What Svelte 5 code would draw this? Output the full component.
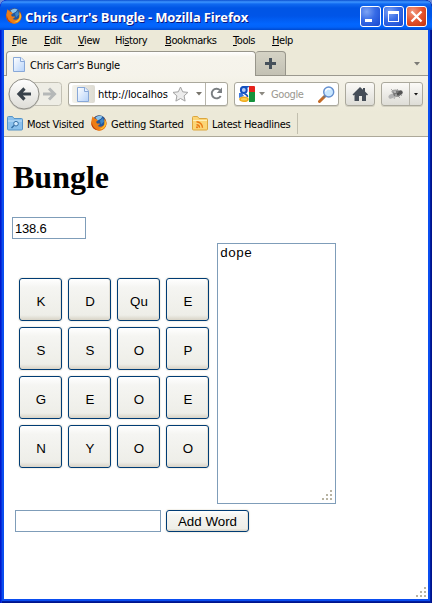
<script>
  const menus = [
    { pre: '', key: 'F', post: 'ile', w: 32 },
    { pre: '', key: 'E', post: 'dit', w: 34 },
    { pre: '', key: 'V', post: 'iew', w: 37 },
    { pre: 'Hi', key: 's', post: 'tory', w: 50 },
    { pre: '', key: 'B', post: 'ookmarks', w: 68 },
    { pre: '', key: 'T', post: 'ools', w: 39 },
    { pre: '', key: 'H', post: 'elp', w: 30 }
  ];
  const letters = ['K', 'D', 'Qu', 'E', 'S', 'S', 'O', 'P', 'G', 'E', 'O', 'E', 'N', 'Y', 'O', 'O'];
</script>

{#snippet firefox()}
  <svg class="fx" width="16" height="16" viewBox="0 0 16 16">
    <circle cx="8" cy="8" r="7.6" fill="#d9560b" />
    <circle cx="8.300" cy="6.500" r="6.200" fill="#23589c" />
    <path d="M4.500 2.500Q8-.5 11.500 1.500L10 3.500 8.500 4.500 6.500 5.500z" fill="#8cc4ea" />
    <path d="M9 5.500l3-2.500 1 3.500-3 3z" fill="#3f86c6" />
    <path d="M.8 4L1.500 1.200 3.400 3.200 5.500 4 6.800 5.800 5 6.800 6 8.600 9 8.600Q8.500 11 6.200 10.600 9.500 13 12.400 10.500 14.500 8 13 3.500 15.800 6 15.500 9.300 14 15.500 8 15.700 2 15 .5 10 0 6 .8 4z" fill="#ee7d15" />
    <path d="M13.600 4.500Q16 8 14 11.500 11.500 15 7.500 14.200 12 13.200 13.500 9.500z" fill="#ffc62e" />
    <path d="M.8 7Q1.300 12.500 6.500 15 2 14.500.6 10z" fill="#b5330c" />
  </svg>
{/snippet}

{#snippet page()}
  <svg width="12" height="15" viewBox="0 0 12 15">
    <defs>
      <linearGradient id="sheet" x1="0" y1="0" x2="1" y2="1">
        <stop offset="0" stop-color="#fff" /><stop offset="1" stop-color="#b5d2fa" />
      </linearGradient>
    </defs>
    <path d="M.5.5H8L11.500 4V14.500H.5z" fill="url(#sheet)" stroke="#88a8d8" />
    <path d="M7.500.5V4.500H11.500" fill="#e9f2ff" stroke="#88a8d8" />
  </svg>
{/snippet}

{#snippet grip()}
  <svg width="10" height="10" viewBox="0 0 10 10" fill="#b8b4a3" shape-rendering="crispEdges">
    <path d="M8 0h2v2H8zM4 4h2v2H4zM8 4h2v2H8zM0 8h2v2H0zM4 8h2v2H4zM8 8h2v2H8z" />
  </svg>
{/snippet}

<div class="window">
  <header class="title">
    {@render firefox()}
    <span class="caption">Chris Carr's Bungle - Mozilla Firefox</span>
    <div class="controls">
      <span class="ctl"><svg width="21" height="21"><path d="M5 13h7v3H5z" fill="#fff" /></svg></span>
      <span class="ctl"><svg width="21" height="21"><path d="M5 5h11v11H5zM6 8v7h9V8z" fill="#fff" fill-rule="evenodd" /></svg></span>
      <span class="ctl close"><svg width="21" height="21"><path d="M5.500 5.500l10 10M15.500 5.500l-10 10" stroke="#fff" stroke-width="2.300" /></svg></span>
    </div>
  </header>

  <div class="body">
    <nav class="menu">
      {#each menus as m}
        <span style:width="{m.w}px">{m.pre}<u>{m.key}</u>{m.post}</span>
      {/each}
    </nav>

    <div class="tabs">
      <div class="tab">{@render page()}<span class="tabname">Chris Carr's Bungle</span></div>
      <div class="plus"><svg width="11" height="11"><path d="M4 0h3v4h4v3H7v4H4V7H0V4h4z" fill="#45505a" /></svg></div>
      <svg class="alltabs" width="6" height="4"><path d="M0 0h6L3 3.500z" fill="#7b7b76" /></svg>
    </div>

    <div class="toolbar">
      <svg class="history" width="56" height="34" viewBox="0 0 56 34">
        <defs>
          <linearGradient id="round" x1="0" y1="0" x2="0" y2="1">
            <stop offset="0" stop-color="#fff" /><stop offset="1" stop-color="#dddcd6" />
          </linearGradient>
        </defs>
        <rect x="20" y="5.500" width="34.500" height="23" rx="3" fill="#eeede5" stroke="#c3c1b5" />
        <circle cx="17" cy="17.500" r="15.500" fill="#c8c6bd" />
        <circle cx="17" cy="17" r="15" fill="url(#round)" stroke="#908f88" />
        <path d="M24 17H12M17.500 11.500L12 17l5.500 5.500" fill="none" stroke="#39424b" stroke-width="3.200" />
        <path d="M36 17h10M42 11.500l5.500 5.500-5.500 5.500" fill="none" stroke="#b5b8b8" stroke-width="3" />
      </svg>

      <div class="field url">
        <span class="identity">{@render page()}</span>
        <span class="address">http://localhos</span>
        <svg class="star" width="17" height="16" viewBox="0 0 17 16"><path d="M8.500 1l2.200 4.800 5.200.6-3.800 3.500 1 5.200-4.600-2.600-4.600 2.600 1-5.200L1 6.400l5.300-.6z" fill="#ececec" stroke="#a2a2a2" /></svg>
        <svg class="drop" width="6" height="4"><path d="M0 0h6L3 3.500z" fill="#77736b" /></svg>
        <span class="reload"><svg width="13" height="13" viewBox="0 0 13 13"><path d="M10.700 9A4.800 4.800 0 1 1 10 3.200" fill="none" stroke="#7b7f82" stroke-width="1.900" /><path d="M12 .5v5.500H6.800z" fill="#7b7f82" /></svg></span>
      </div>

      <div class="field search">
        <svg width="16" height="16" viewBox="0 0 16 16">
          <path d="M10 0h5q1 0 1 1v5h-6z" fill="#e5231c" />
          <path d="M10 6h6v9q0 1-1 1h-5z" fill="#15923c" />
          <path d="M0 7h3l2 3-5 2z" fill="#3a78e0" />
          <ellipse cx="4.800" cy="4" rx="2.900" ry="3.100" fill="#b5cdf8" stroke="#1450bf" stroke-width="2" />
          <path d="M5 0h5.500L9 1.800H7z" fill="#1450bf" />
          <path d="M5.500 8q3 .5 3 3" fill="none" stroke="#1450bf" stroke-width="1.600" />
          <ellipse cx="5" cy="13.200" rx="4" ry="2" fill="#f9cf52" stroke="#efaa1e" stroke-width="1.600" />
        </svg>
        <svg class="sdrop" width="6" height="4"><path d="M0 0h6L3 3.500z" fill="#8b8880" /></svg>
        <span class="hint">Google</span>
        <svg class="lens" width="17" height="17" viewBox="0 0 17 17"><path d="M1.500 15.500l5-5" stroke="#c56b26" stroke-width="3" stroke-linecap="round" /><path d="M5.500 11.500l2-2" stroke="#777" stroke-width="2" /><circle cx="10.700" cy="6" r="5" fill="#c9e7ff" stroke="#6690cf" stroke-width="1.400" /><path d="M7.500 5.500a3 3 0 0 1 5-2" fill="none" stroke="#fff" stroke-width="1.500" /></svg>
      </div>

      <div class="btn home"><svg width="16" height="14" viewBox="0 0 16 14"><path d="M8 0l3 2.700V1h2v3.500l3 3-1 1-1-.7V14h-4V9H7v5H2.500V7.800l-1 .7-1-1z" fill="#454d57" /></svg></div>

      <div class="btn bug">
        <svg width="18" height="14" viewBox="0 0 18 14">
          <path d="M6 4L4 2M10 3l1-1M5 9l-2 2.500M8 10l-1 2M11 9l2 2M13 7l2 2" stroke="#999" stroke-width=".8" />
          <ellipse cx="5" cy="9" rx="3.800" ry="2.200" transform="rotate(-25 5 9)" fill="#b3b3b3" />
          <ellipse cx="8.500" cy="4.500" rx="4" ry="2" fill="#a2a2a2" />
          <ellipse cx="10" cy="6.800" rx="3.800" ry="3" fill="#777" />
          <circle cx="13.500" cy="5.500" r="2.200" fill="#555" /><circle cx="8" cy="5" r="1" fill="#c6c6c6" /><circle cx="11" cy="7" r="1" fill="#444" /><circle cx="9" cy="8" r=".8" fill="#ccc" />
        </svg>
        <span class="more"><svg width="4" height="3"><path d="M0 0h4L2 2.500z" fill="#111" /></svg></span>
      </div>
    </div>

    <div class="bookmarks">
      <svg width="16" height="15" viewBox="0 0 16 15"><path d="M.5 13V1.500q0-1 1-1h4l1.500 2h7.500q1 0 1 1V13q0 1-1 1h-13q-1 0-1-1z" fill="#8bc1ed" stroke="#5494c8" /><path d="M1 5h14" stroke="#c2e1fa" /><circle cx="9" cy="7.700" r="2.300" fill="#d3ebff" stroke="#356fa4" /><path d="M7 9.500l-2.500 2.500" stroke="#356fa4" stroke-width="1.500" /></svg>
      <span class="label" style:width="64px">Most Visited</span>
      {@render firefox()}
      <span class="label" style:width="81px">Getting Started</span>
      <svg width="16" height="15" viewBox="0 0 16 15"><path d="M.5 13V1.500q0-1 1-1h4l1.500 2h7.500q1 0 1 1V13q0 1-1 1h-13q-1 0-1-1z" fill="#fbd576" stroke="#dca63d" /><path d="M1 4.500h14" stroke="#fff0b8" /><path d="M4.500 8.700a3 3 0 0 1 3 3M4.500 5.700a6 6 0 0 1 6 6" fill="none" stroke="#e97812" stroke-width="1.400" /><circle cx="5" cy="11.300" r="1" fill="#e97812" /></svg>
      <span class="label last">Latest Headlines</span>
    </div>

    <main>
      <h1>Bungle</h1>
      <div class="box timer">138.6</div>
      <div class="game">
        <div class="board">
          {#each letters as l}<button class="xp">{l}</button>{/each}
        </div>
        <div class="box words"><span>dope</span><i>{@render grip()}</i></div>
      </div>
      <div class="entry">
        <div class="box word"></div>
        <button class="xp add">Add Word</button>
      </div>
      <i class="corner">{@render grip()}</i>
    </main>
  </div>
</div>

<style>
  :global(body) { margin: 0; background: #6f8fd8; }
  * { box-sizing: border-box; }
  svg { display: block; flex: none; }
  .window {
    width: 432px; height: 603px; padding: 0 4px 4px; overflow: hidden;
    display: flex; flex-direction: column;
    border-radius: 7px 7px 0 0;
    background: #0a4df0;
    box-shadow: inset 1px 0 #0019cf, inset 2px 0 #0831d9, inset -1px 0 #00138c, inset -2px 0 #001ea0, inset 0 -1px #00138c, inset 0 -2px #001ea0;
    font: 11px/14px "DejaVu Sans Condensed", "DejaVu Sans", sans-serif;
    letter-spacing: -.26px;
    color: #000;
  }
  .title {
    height: 30px; flex: none; margin: 0 -4px; padding: 2px 6px 0;
    display: flex; align-items: center;
    background: linear-gradient(#0b4fd0 0, #3d95ff 2px, #1069f0 4px, #0055e5 8px, #0055e8 16px, #0266ff 24px, #0263fa 27px, #0049cf 30px);
    border-radius: 7px 7px 0 0;
  }
  .caption { margin-left: 3px; padding-top: 1px; color: #fff; font: bold 13px/18px "Open Sans", sans-serif; white-space: nowrap; letter-spacing: -.15px; text-shadow: 1px 1px #0a1883; }
  .controls { display: flex; gap: 2px; margin-left: auto; margin-right: -1px; }
  .ctl { width: 21px; height: 21px; border: 1px solid #fff; border-radius: 3px; background: radial-gradient(circle at 30% 25%, #7ea4f4, #376be6 45%, #1747ce); }
  .ctl svg { margin: -1px; }
  .close { background: radial-gradient(circle at 30% 25%, #f19a80, #e3522d 50%, #c23209); }
  .body { flex: 1; display: flex; flex-direction: column; background: #ece9d8; min-height: 0; }
  .menu { height: 21px; flex: none; display: flex; padding: 4px 0 0 8px; white-space: nowrap; letter-spacing: -.42px; }
  .menu span { flex: none; }
  u { text-underline-offset: 1px; text-decoration-thickness: 1px; }
  .tabs { height: 25px; flex: none; display: flex; padding-left: 2px; box-shadow: inset 0 -1px #9b998f; }
  .tab { width: 250px; display: flex; align-items: center; padding: 1px 0 0 6px; gap: 5px; border: 1px solid #97958a; border-bottom: 0; border-radius: 4px 4px 0 0; background: linear-gradient(#fff, #f6f4ec 5px, #f5f3ea); white-space: nowrap; }
  .tabname { padding-top: 2px; }
  .plus { width: 30px; display: flex; align-items: center; justify-content: center; border: 1px solid #97958a; border-left: 0; border-radius: 3px 4px 0 0; background: linear-gradient(#d5d3c5, #c3c1b4); }
  .alltabs { margin: 11px 8px 0 auto; }
  .toolbar { height: 36px; flex: none; display: flex; align-items: center; padding-left: 3px; background: linear-gradient(#f5f3ea, #ece9d8); }
  .field, .btn { height: 24px; border: 1px solid #aaa89c; border-radius: 3px; display: flex; align-items: center; box-shadow: 0 1px #d3d0c1; white-space: nowrap; }
  .field { background: #fff; }
  .url { width: 160px; margin-left: 5px; padding-left: 3px; }
  .identity { width: 23px; height: 18px; padding: 2px 0 0 5px; border-radius: 2px; background: linear-gradient(90deg, #f4f3ed, #dddbd2); }
  .address { width: 71px; margin-left: 3px; padding-top: 2px; letter-spacing: -.06px; }
  .star { margin-left: 3px; }
  .drop { margin-left: 7px; }
  .reload { height: 22px; margin-left: auto; padding: 4px 4px 0; border-left: 1px solid #b7b5ab; }
  .search { width: 105px; margin-left: 6px; padding-left: 4px; }
  .sdrop { margin-left: 4px; }
  .hint { width: 34px; margin-left: 6px; padding-top: 2px; color: #9a978f; letter-spacing: -.4px; }
  .lens { margin-left: 13px; }
  .btn { background: linear-gradient(#fbfaf7, #deddd7); }
  .home { width: 30px; margin-left: 6px; justify-content: center; }
  .bug { width: 42px; margin-left: 6px; padding-left: 5px; }
  .more { height: 22px; width: 13px; margin-left: auto; padding: 10px 0 0 4px; border-left: 1px solid #b7b5ab; }
  .bookmarks { height: 25px; flex: none; display: flex; align-items: center; padding: 0 0 2px 3px; border-bottom: 1px solid #aca899; white-space: nowrap; }
  .bookmarks .label { flex: none; padding: 4px 0 0 4px; margin-right: 4px; }
  .bookmarks .last { width: 90px; height: 21px; padding-top: 5px; border-right: 1px solid #c2bfae; }
  main { position: relative; flex: 1; min-height: 0; padding: 22px 8px 0; background: #fff; font: 13.333px/16px "Liberation Sans", sans-serif; letter-spacing: 0; }
  h1 { height: 37px; margin: 0 0 21px; padding-left: 1px; font: bold 32px/37px "Liberation Serif", serif; }
  .box { border: 1px solid #7f9db9; background: #fff; }
  .timer { width: 74px; height: 22px; padding: 3px 2px; font-size: 13px; letter-spacing: -.2px; }
  .game { display: flex; align-items: flex-start; margin-top: 4px; padding-left: 7px; height: 261px; }
  .board { display: grid; grid-template-columns: repeat(4, 43px); grid-auto-rows: 43px; gap: 6px; margin-top: 35px; }
  .xp { margin: 0; padding: 4px 0 0 1px; border: 1px solid #003c74; border-radius: 3px; font: inherit; color: #000; background: linear-gradient(#fff, #f5f5f2 20%, #eeeee8 88%, #d8d3c6); box-shadow: inset -1px 0 #e3e0d6, 0 0 1px 1px #f3f1ea; }
  .words { position: relative; width: 119px; height: 261px; margin-left: 8px; padding: 2px; font: 13.333px/16px "Liberation Mono", monospace; }
  .words i { position: absolute; right: 3px; bottom: 3px; }
  .entry { display: flex; gap: 5px; margin-top: 6px; padding-left: 3px; }
  .word { width: 146px; height: 22px; }
  .add { width: 83px; height: 22px; padding: 1px 0 0; }
  .corner { position: absolute; right: 2px; bottom: 2px; }
</style>
